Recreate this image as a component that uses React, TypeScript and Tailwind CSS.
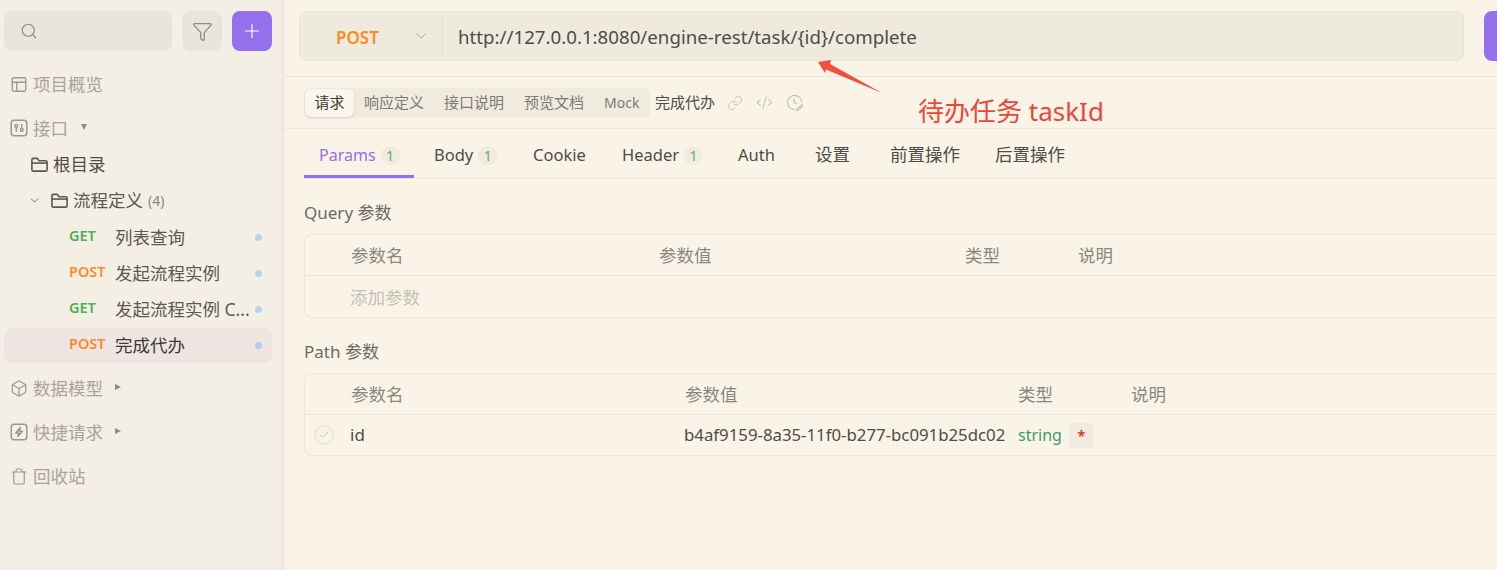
import { Box, Check, ChevronDown, CodeXml, Filter, Link, PanelsTopLeft, Plus, Search, Trash } from "lucide-react";

const font = "font-['Noto_Sans','Noto_Sans_CJK_SC',sans-serif]";

function FolderIcon() {
  return (
    <svg viewBox="0 0 20 20" className="w-[19px] h-[19px] mr-[4px] text-[#5c5952]" fill="none" stroke="currentColor" strokeWidth="1.7" strokeLinejoin="round">
      <path d="M2 15.5V5A1.5 1.5 0 0 1 3.5 3.5h4l2 2.5h7A1.5 1.5 0 0 1 18 7.5v8a1.5 1.5 0 0 1-1.5 1.5h-13A1.5 1.5 0 0 1 2 15.5Z" />
      <path d="M2 8.5h16" />
    </svg>
  );
}

function SliderBoxIcon() {
  return (
    <svg viewBox="0 0 18 18" className="w-[18px] h-[18px]" fill="none" stroke="currentColor" strokeWidth="1.5">
      <rect x="1.2" y="1.2" width="15.6" height="15.6" rx="3" />
      <circle cx="6.3" cy="7" r="1.4" />
      <path d="M6.3 8.4V13" />
      <path d="M11.7 5v4.4" />
      <circle cx="11.7" cy="11" r="1.4" />
    </svg>
  );
}

function BoltBoxIcon() {
  return (
    <svg viewBox="0 0 18 18" className="w-[18px] h-[18px]" fill="none" stroke="currentColor" strokeWidth="1.5" strokeLinejoin="round">
      <rect x="1.2" y="1.2" width="15.6" height="15.6" rx="3" />
      <path d="M10.2 4.5 5.8 10h3l-1 3.6 4.4-5.4h-3z" />
    </svg>
  );
}

function NavItem({ icon, label, caret, className }: { icon: React.ReactNode; label: string; caret?: "down" | "right"; className: string }) {
  return (
    <div className={`flex items-center h-[34px] pl-[6px] text-[#a8a498] text-[17.5px] ${className}`}>
      <span className="w-[18px] h-[18px] mr-[5px] flex items-center justify-center text-[#9c988c]">{icon}</span>
      {label}
      {caret === "down" && <span className="ml-[13px] mt-[-2px] w-0 h-0 border-l-[3.5px] border-r-[3.5px] border-t-[6px] border-l-transparent border-r-transparent border-t-[#8f8b80]" />}
      {caret === "right" && <span className="ml-[12px] mt-[-2px] w-0 h-0 border-t-[3.5px] border-b-[3.5px] border-l-[6px] border-t-transparent border-b-transparent border-l-[#8f8b80]" />}
    </div>
  );
}

function ApiRow({ method, name, active }: { method: "GET" | "POST"; name: string; active?: boolean }) {
  return (
    <div className={`flex items-center h-[35px] mb-px pl-[65px] pr-[10px] rounded-lg ${active ? "bg-[#eee5e2]" : ""}`}>
      <span className={`w-[46px] shrink-0 mt-[-3px] text-[14.5px] font-semibold ${method === "GET" ? "text-[#4caf50]" : "text-[#ff8a1f]"}`}>{method}</span>
      <span className={`flex-1 whitespace-nowrap text-[17.5px] ${active ? "text-[#3d3a35]" : "text-[#5c5952]"}`}>{name}</span>
      <span className={`ml-1 w-[7px] h-[7px] rounded-full shrink-0 ${active ? "bg-[#aecdec]" : "bg-[#b5d3ec]"}`} />
    </div>
  );
}

function Sidebar() {
  return (
    <aside className="w-[284px] shrink-0 h-full bg-[#f4efe4] border-r-2 border-[#ebe6da] pl-1 pr-[10px] pt-[11px]">
      <div className="flex items-center">
        <div className="w-[168px] h-10 rounded-lg bg-[#e9e5da] flex items-center pl-4">
          <Search size={18} strokeWidth={1.5} className="text-[#8f8c82]" />
        </div>
        <div className="ml-[10px] w-10 h-10 rounded-lg bg-[#e9e5da] flex items-center justify-center">
          <Filter size={21} strokeWidth={1.5} className="text-[#8f8c82]" />
        </div>
        <div className="ml-[10px] w-10 h-10 rounded-lg bg-[#9570ec] flex items-center justify-center">
          <Plus size={22} strokeWidth={1.25} className="text-white" />
        </div>
      </div>
      <NavItem className="mt-[16px]" icon={<PanelsTopLeft size={19} strokeWidth={1.75} />} label="项目概览" />
      <NavItem className="mt-[10px]" icon={<SliderBoxIcon />} label="接口" caret="down" />
      <div className="flex items-center h-9 mt-[1px] pl-[26px] text-[17.5px] text-[#4f4c46]">
        <FolderIcon />
        根目录
      </div>
      <div className="flex items-center h-9 pl-[24px] text-[17.5px] text-[#5c5952]">
        <ChevronDown size={13} strokeWidth={1.75} className="mr-[9px] text-[#6d6a62]" />
        <FolderIcon />
        流程定义
        <span className="ml-[5px] text-[14px] text-[#8a877e]">(4)</span>
      </div>
      <div className="h-[2px]" />
      <ApiRow method="GET" name="列表查询" />
      <ApiRow method="POST" name="发起流程实例" />
      <ApiRow method="GET" name="发起流程实例 C..." />
      <ApiRow method="POST" name="完成代办" active />
      <NavItem className="mt-[8px]" icon={<Box size={19} strokeWidth={1.6} />} label="数据模型" caret="right" />
      <NavItem className="mt-[10px]" icon={<BoltBoxIcon />} label="快捷请求" caret="right" />
      <NavItem className="mt-[10px]" icon={<Trash size={19} strokeWidth={1.6} />} label="回收站" />
    </aside>
  );
}

function Count() {
  return <span className="ml-[5px] w-[19px] h-[19px] rounded-full bg-[#f0ebdf] text-[#5fae7a] text-[14px] flex items-center justify-center">1</span>;
}

function Tab({ label, count, active, className }: { label: string; count?: boolean; active?: boolean; className: string }) {
  return (
    <div className={`flex items-center h-full ${active ? "text-[#9570ec] border-b-[3px] border-[#9570ec]" : "text-[#4f4c46]"} ${className}`}>
      {label}
      {count && <Count />}
    </div>
  );
}

function ParamTable({ cols, children }: { cols: number[]; children: React.ReactNode }) {
  const names = ["参数名", "参数值", "类型", "说明"];
  return (
    <div className="border border-r-0 border-[#ebe6da] rounded-l-lg">
      <div className="flex items-center h-[41px] pl-[46px] border-b border-[#ebe6da] text-[17.5px] text-[#8a877e]">
        {names.map((n, i) => (
          <span key={n} className="shrink-0" style={{ width: cols[i] }}>{n}</span>
        ))}
      </div>
      {children}
    </div>
  );
}

export default function App() {
  return (
    <div className={`relative flex w-[1497px] h-[570px] overflow-hidden bg-[#faf4e8] ${font}`}>
      <Sidebar />
      <main className="flex-1 min-w-0 overflow-hidden">
        <div className="flex h-[77px] pt-[11px] pl-[15px] border-b border-[#ebe6da]">
          <div className="flex w-[1165px] h-[50px] rounded-lg bg-[#eeeadd] border border-[#e8e4d7] shrink-0">
            <div className="w-[143px] border-r border-[#e5e1d4] flex items-center shrink-0">
              <span className="ml-[36px] pt-[4px] text-[17px] font-semibold text-[#ff8a1f]">POST</span>
              <ChevronDown size={18} strokeWidth={1.25} className="ml-[33px] text-[#a8a498]" />
            </div>
            <div className="pl-[15px] pt-[3px] flex items-center text-[18.7px] text-[#4f4c46]">http://127.0.0.1:8080/engine-rest/task/{"{id}"}/complete</div>
          </div>
          <div className="ml-5 w-10 h-[50px] rounded-l-lg bg-[#9570ec] shrink-0" />
        </div>
        <div className="flex items-center h-[52px] pl-5 border-b border-[#f0e9d8]">
          <div className="flex items-center h-[30px] w-[346px] rounded-md bg-[#f0ebdf] text-[15px] text-[#7d7a71]">
            <span className="h-[28px] w-[49px] ml-[1px] flex items-center justify-center rounded-md bg-[#faf6ec] shadow-sm text-[#3d3a35]">请求</span>
            <span className="ml-[10px]">响应定义</span>
            <span className="ml-[20px]">接口说明</span>
            <span className="ml-[20px]">预览文档</span>
            <span className="ml-[20px] text-[14px]">Mock</span>
          </div>
          <span className="ml-[5px] text-[15px] text-[#4f4c46]">完成代办</span>
          <Link size={16} strokeWidth={1.5} className="ml-[12px] text-[#c4c0b4]" />
          <CodeXml size={17} strokeWidth={1.5} className="ml-[13px] text-[#c4c0b4]" />
          <svg viewBox="0 0 16 16" className="ml-[13px] w-[17px] h-[17px] text-[#c4c0b4]" fill="none" stroke="currentColor" strokeWidth="1.1" strokeLinecap="round">
            <path d="M14.8 7.5A6.7 6.7 0 1 0 8.2 14.7" />
            <path d="M7.5 4.5V8l2.6 1" />
            <path d="M10.2 14.6l4.6-4.4 1 1-4.5 4.4-1.4.2z" />
          </svg>
        </div>
        <div className="flex items-stretch h-[50px] ml-5 border-b border-[#ebe6da] text-[17.5px]">
          <Tab label="Params" count active className="w-[110px] pl-[15px] pt-[6px] text-[16px]" />
          <Tab label="Body" count className="pl-5 pt-[4px] w-[119px] text-[16.5px]" />
          <Tab label="Cookie" className="w-[89px] pt-[4px] text-[16.5px]" />
          <Tab label="Header" count className="w-[116px] pt-[4px] text-[16.5px]" />
          <Tab label="Auth" className="w-[77px] pt-[4px] text-[16.5px]" />
          <Tab label="设置" className="w-[75px] pt-[2px]" />
          <Tab label="前置操作" className="w-[105px] pt-[2px]" />
          <Tab label="后置操作" className="w-[100px] pt-[2px]" />
        </div>
        <div className="pl-5">
          <div className="h-[55px] pt-[22px] text-[17px] leading-6 text-[#6d6a62]">Query 参数</div>
          <ParamTable cols={[308, 306, 113, 100]}>
            <div className="flex items-center h-[41px] pt-[2px] text-[17.5px] text-[#c4c0b4]">
              <span className="ml-[45px]">添加参数</span>
            </div>
          </ParamTable>
          <div className="h-[55px] pt-[22px] text-[17px] leading-6 text-[#6d6a62]">Path 参数</div>
          <ParamTable cols={[334, 333, 113, 100]}>
            <div className="flex items-center h-[40px] text-[17px] text-[#4f4c46]">
              <span className="ml-[9px] w-5 h-5 rounded-full border-2 border-[#ece7da] flex items-center justify-center">
                <Check size={12} strokeWidth={2} className="text-[#a8d5a8]" />
              </span>
              <span className="ml-4 w-[334px] shrink-0">id</span>
              <span className="w-[334px] shrink-0 text-[16.8px] whitespace-nowrap">b4af9159-8a35-11f0-b277-bc091b25dc02</span>
              <span className="text-[16px] text-[#3f9c6a]">string</span>
              <span className="ml-[7px] w-[25px] h-[25px] rounded bg-[#f0ebdf] text-[14px] font-bold text-[#e53935] flex items-center justify-center">*</span>
            </div>
          </ParamTable>
        </div>
      </main>

      {/* annotation drawn over the screenshot */}
      <svg className="absolute left-[810px] top-[50px] w-[80px] h-[50px]" viewBox="0 0 80 50">
        <path d="M8 12 L21 10 L20 14 L72 43 L16 19.5 L15 23 Z" fill="#f0503c" />
      </svg>
      <span className="absolute left-[918px] top-[93px] text-[26px] leading-9 text-[#f0443a]">待办任务 taskId</span>
    </div>
  );
}
